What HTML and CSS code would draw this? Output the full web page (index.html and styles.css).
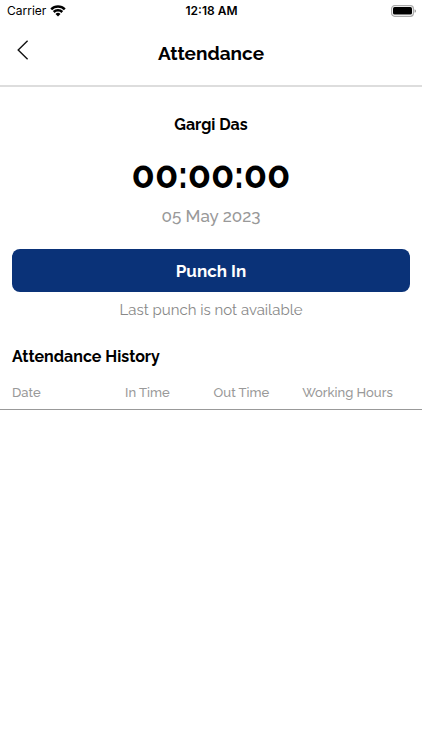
FILE: index.html
```html
<!DOCTYPE html>
<html lang="en">
<head>
<meta charset="utf-8">
<meta name="viewport" content="width=device-width, initial-scale=1">
<title>Attendance</title>
<link rel="stylesheet" href="styles.css">
</head>
<body>
<div class="status-bar">
  <div class="carrier">
    <span>Carrier</span>
    <svg class="wifi" viewBox="0 0 16 12" aria-hidden="true">
      <path d="M1.2 4.4a9.7 9.7 0 0 1 13.6 0M3.7 7a6.1 6.1 0 0 1 8.6 0" fill="none" stroke="#000" stroke-width="2.5"/>
      <path d="M8 11.5 5.5 9a3.5 3.5 0 0 1 5 0z"/>
    </svg>
  </div>
  <span class="clock">12:18 AM</span>
  <svg class="battery" viewBox="0 0 26 12" aria-hidden="true">
    <rect x="1.6" y="0.7" width="21.8" height="10.6" rx="3" fill="none" stroke="#aaa" stroke-width="1.2"/>
    <rect x="3" y="2" width="19" height="7.6" rx="1.6"/>
    <path d="M24.6 4.2v3.6a1.9 1.9 0 0 0 0-3.6z" fill="#888"/>
  </svg>
</div>
<header class="header">
  <button class="back" type="button" aria-label="Back">
    <svg viewBox="0 0 12 20" aria-hidden="true"><path d="M10.6 0.8 1.2 10l9.4 9.2" fill="none" stroke="#111" stroke-width="1.4"/></svg>
  </button>
  <h1 class="title">Attendance</h1>
</header>
<main>
  <section class="punch">
    <h2 class="name">Gargi Das</h2>
    <div class="timer">00:00:00</div>
    <div class="date">05 May 2023</div>
    <button class="punch-button" type="button">Punch In</button>
    <p class="last-punch">Last punch is not available</p>
  </section>
  <section>
    <h2 class="history-title">Attendance History</h2>
    <table class="history">
      <thead>
        <tr><th scope="col">Date</th><th scope="col">In Time</th><th scope="col">Out Time</th><th scope="col">Working Hours</th></tr>
      </thead>
    </table>
  </section>
</main>
</body>
</html>
```
FILE: styles.css
```css
* {
  box-sizing: border-box;
}

body {
  margin: 0;
  background: #fff;
  color: #000;
  font-family: Raleway, Lato, sans-serif;
}

h1, h2, p {
  margin: 0;
}

button {
  border: 0;
  font-family: inherit;
  cursor: pointer;
}

svg {
  display: block;
}

.status-bar {
  display: grid;
  grid-template-columns: 1fr auto 1fr;
  align-items: center;
  height: 22px;
  padding: 0 6px 0 7px;
  font: 12px/16px Inter, sans-serif;
}

.carrier {
  display: flex;
  align-items: center;
  gap: 4px;
}

.wifi {
  width: 16px;
  height: 12px;
}

.clock {
  font-weight: 600;
}

.battery {
  justify-self: end;
  width: 26px;
  height: 12px;
}

.header {
  display: grid;
  grid-template-columns: 44px 1fr 44px;
  align-items: center;
  height: 65px;
  border-bottom: 2px solid #ddd;
}

.back {
  display: flex;
  align-items: center;
  height: 44px;
  padding: 0 0 8px 17px;
  background: none;
}

.back svg {
  width: 12px;
  height: 20px;
}

.title {
  padding-bottom: 2px;
  text-align: center;
  font-size: 19px;
  font-weight: 700;
  line-height: 24px;
}

.punch {
  padding: 26px 12px 0;
  text-align: center;
}

.name, .history-title {
  font-size: 16px;
  line-height: 24px;
}

.timer {
  margin-top: 16px;
  font-size: 38px;
  font-weight: 700;
  line-height: 44px;
}

.date {
  margin-top: 7px;
  color: #999;
  font-size: 17px;
  font-weight: 500;
  line-height: 24px;
}

.punch-button {
  display: block;
  width: 100%;
  height: 43px;
  margin-top: 21px;
  border-radius: 8px;
  background: #0a3278;
  color: #fff;
  font-size: 17px;
  font-weight: 700;
}

.last-punch {
  margin-top: 6px;
  color: #888;
  font-size: 15px;
  line-height: 24px;
}

.history-title {
  padding: 0 12px;
  margin-top: 23px;
}

.history {
  width: 100%;
  margin-top: 12px;
  border-collapse: collapse;
  table-layout: fixed;
  border-bottom: 1px solid #999;
}

.history th {
  width: 21%;
  padding: 0 0 4px;
  color: #999;
  font-size: 13px;
  font-weight: 500;
  line-height: 24px;
  text-align: left;
}

.history th:first-child {
  width: 125px;
  padding-left: 12px;
}

.history th:last-child {
  width: auto;
}
```
